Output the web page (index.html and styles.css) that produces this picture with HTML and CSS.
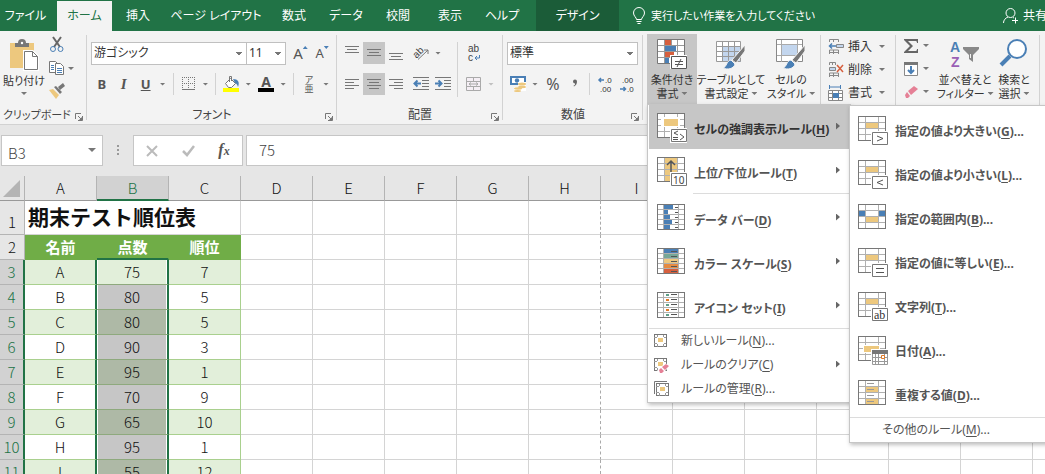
FILE: index.html
```html
<!DOCTYPE html>
<html lang="ja">

<head>
  <meta charset="UTF-8">
  <meta name="viewport" content="width=device-width, initial-scale=1.0">
  <title>期末テスト順位表</title>
  <link rel="stylesheet" href="styles.css">
</head>

<body>
  <!-- Shared icon parts -->
  <svg width="0" height="0" class="sprite" aria-hidden="true">
    <symbol id="grid" viewBox="0 0 30 30">
      <rect x=".5" y=".5" width="27" height="24" fill="#fff" />
      <path d="M7.5 1v23M20.5 1v23M1 6.5h26M1 12.5h26M1 18.5h26" stroke="#b0b0b0" fill="none" />
      <rect x=".5" y=".5" width="27" height="24" fill="none" stroke="#777" />
    </symbol>
    <symbol id="grid-hit" viewBox="0 0 30 30">
      <use href="#grid" width="30" height="30" />
      <path d="M8 7h12v5H8z" fill="#edc87e" />
    </symbol>
    <symbol id="badge" viewBox="0 0 30 30">
      <path d="M13 15h17v15H13z" fill="#fff" />
      <path d="M14.5 16.5h15v12h-15z" fill="#fff" stroke="#777" />
    </symbol>
    <symbol id="grid-rows" viewBox="0 0 30 30">
      <rect x=".5" y=".5" width="27" height="25" fill="#fff" />
      <path d="M6.5 1v24M21.5 1v24M1 5.5h26M1 10.5h26M1 15.5h26M1 20.5h26" stroke="#b0b0b0" fill="none" />
      <rect x=".5" y=".5" width="27" height="25" fill="none" stroke="#777" />
    </symbol>
    <symbol id="small-grid" viewBox="0 0 16 16">
      <rect x=".5" y="1.5" width="12" height="12" fill="#fff" stroke="#777" />
      <path d="M0 4.5h12M0 10.5h12M3.5 2v12M9.5 2v12" stroke="#999" />
      <path d="M3 4h7v7H3z" fill="#fff" />
      <path d="M4 5h5v4H4z" fill="#edc87e" />
    </symbol>
    <symbol id="launcher" viewBox="0 0 8 8">
      <path d="M.5 6V.5H6M3 3l3 3M7.5 3v4.5H3" stroke="#777" fill="none" />
      <path d="M7 4v3H4z" fill="#777" />
    </symbol>
  </svg>

  <div class="app">
    <header class="tabs">
      <nav class="tab-list">
        <a class="tab file" href="#">ファイル</a>
        <a class="tab active" href="#">ホーム</a>
        <a class="tab" href="#">挿入</a>
        <a class="tab wide" href="#">ページ レイアウト</a>
        <a class="tab" href="#">数式</a>
        <a class="tab" href="#">データ</a>
        <a class="tab" href="#">校閲</a>
        <a class="tab" href="#">表示</a>
        <a class="tab" href="#">ヘルプ</a>
        <a class="tab design" href="#">デザイン</a>
      </nav>
      <button class="tell-me">
        <svg width="12" height="18" viewBox="0 0 12 18" fill="none" stroke="#fff">
          <path d="M3.5 12.5c0-2-3-3.500-3-6.500a5.500 5.500 0 0 1 11 0c0 3-3 4.500-3 6.500zM3.500 14.500h5M4.500 16.500h3" />
        </svg>
        実行したい作業を入力してください
      </button>
      <button class="share">
        <svg width="16" height="16" viewBox="0 0 16 16" fill="none" stroke="#fff">
          <circle cx="7.5" cy="5" r="4.5" />
          <path d="M.5 15c0-3 2-5 4.500-6M10 9.500l1 .5M9 12.500h6M12.500 9.500v6" />
        </svg>
        共有
      </button>
    </header>

    <section class="ribbon">
      <!-- Clipboard -->
      <div class="group clipboard">
        <div class="group-body">
          <button class="big paste">
            <svg width="30" height="32" viewBox="0 0 30 32">
              <path d="M1 4h24v25H1z" fill="#edc87e" />
              <path d="M6 8V4h3a4 4 0 0 1 8 0h3v4z" fill="#777" />
              <circle cx="13" cy="4" r="1.2" fill="#fff" />
              <path d="M15.5 12.5h8l5 5v13h-13z" fill="#fff" stroke="#fff" stroke-width="3" />
              <path d="M15.5 12.5h8l5 5v13h-13zM23.5 12.5v5h5" fill="#fff" stroke="#777" />
            </svg>
            <span>貼り付け</span>
            <i class="caret"></i>
          </button>
          <div class="stack">
            <button class="tool" aria-label="切り取り">
              <svg width="16" height="16" viewBox="0 0 16 16" fill="none">
                <path d="M4 0l7 10M12 0L5 10" stroke="#666" stroke-width="2" />
                <circle cx="4" cy="12" r="2.5" stroke="#4a7fb5" />
                <circle cx="11.5" cy="12" r="2.5" stroke="#4a7fb5" />
              </svg>
            </button>
            <button class="tool" aria-label="コピー">
              <svg width="16" height="16" viewBox="0 0 16 16">
                <path d="M.5 1.5h6l2 2v9h-8z" fill="#fff" stroke="#777" />
                <path d="M2 5.5h3M2 7.5h3M2 9.5h3" stroke="#4a7fb5" />
                <path d="M6.5 3.5h5l3 3v8h-8z" fill="#fff" stroke="#777" />
                <path d="M8 8.5h5M8 10.5h5M8 12.5h5" stroke="#4a7fb5" />
              </svg>
            </button>
            <button class="tool" aria-label="書式のコピー">
              <svg width="16" height="16" viewBox="0 0 16 16">
                <path d="M0 7l4-1 6 6-3 4z" fill="#edc87e" />
                <path d="M5 4l2-1 6 6-2 2zM9 4l5-4 2 3-5 4z" fill="#777" />
              </svg>
            </button>
          </div>
          <i class="caret"></i>
        </div>
        <div class="group-label">クリップボード<svg class="launcher" width="8" height="8"><use href="#launcher" /></svg></div>
      </div>

      <!-- Font -->
      <div class="group font">
        <div class="group-body rows">
          <div class="row">
            <select class="box font-name" aria-label="フォント"><option>游ゴシック</option></select>
            <select class="box font-size" aria-label="フォント サイズ"><option>11</option></select>
            <button class="tool size-step" aria-label="拡大"><span class="up">A</span><i class="mark up-mark"></i></button>
            <button class="tool size-step" aria-label="縮小"><span class="down">A</span><i class="mark down-mark"></i></button>
          </div>
          <div class="row">
            <button class="tool letter"><b>B</b></button>
            <button class="tool letter"><em>I</em></button>
            <button class="tool letter"><u>U</u></button>
            <i class="caret slot"></i>
            <i class="bar"></i>
            <button class="tool" aria-label="罫線">
              <svg width="14" height="14" viewBox="0 0 14 14" stroke="#777">
                <path d="M0 .5h14M0 6.5h14M.5 0v13M6.5 0v13M12.5 0v13" stroke-dasharray="1 1" />
                <path d="M0 12.5h13" />
              </svg>
            </button>
            <i class="caret slot"></i>
            <i class="bar"></i>
            <button class="tool" aria-label="塗りつぶしの色">
              <svg width="16" height="16" viewBox="0 0 16 16">
                <path d="M2.5 7.5l5-5 5 5-4 4h-3z" fill="#fff" stroke="#777" />
                <path d="M6.5 6V.5h2V5" stroke="#777" fill="none" />
                <path d="M10 3c5 0 7 3 5 8-1-3-2-4-3-4z" fill="#4a7fb5" />
                <path d="M0 12h16v4H0z" fill="#ff0" />
              </svg>
            </button>
            <i class="caret slot"></i>
            <button class="tool font-color" aria-label="フォントの色"><b>A</b></button>
            <i class="caret slot"></i>
            <i class="bar"></i>
            <button class="tool ruby" aria-label="ふりがな"><span>ア</span><span>亜</span></button>
            <i class="caret slot"></i>
          </div>
        </div>
        <div class="group-label">フォント<svg class="launcher" width="8" height="8"><use href="#launcher" /></svg></div>
      </div>

      <!-- Alignment -->
      <div class="group align">
        <div class="group-body">
          <div class="rows">
            <div class="row">
              <button class="tool" aria-label="上揃え"><svg width="14" height="14" stroke="#777"><path d="M0 .5h14M2 3.5h10M0 6.5h14" /></svg></button>
              <button class="tool on" aria-label="上下中央揃え"><svg width="14" height="14" stroke="#777"><path d="M0 3.5h14M2 6.5h10M0 9.5h14" /></svg></button>
              <button class="tool" aria-label="下揃え"><svg width="14" height="14" stroke="#777"><path d="M0 7.5h14M2 10.5h10M0 13.5h14" /></svg></button>
              <button class="tool gap" aria-label="方向">
                <svg width="17" height="16" viewBox="0 0 17 16">
                  <text x="0" y="11" transform="rotate(-45 5 8)" class="icon-ab">ab</text>
                  <path d="M5 14.5L15 5M11 5h4v4" stroke="#777" fill="none" />
                </svg>
              </button>
              <i class="caret slot"></i>
            </div>
            <div class="row">
              <button class="tool" aria-label="左揃え"><svg width="14" height="14" stroke="#777"><path d="M0 2.5h14M0 5.5h9M0 8.5h14M0 11.5h9" /></svg></button>
              <button class="tool on" aria-label="中央揃え"><svg width="14" height="14" stroke="#777"><path d="M0 2.5h14M2 5.5h10M0 8.5h14M2 11.5h10" /></svg></button>
              <button class="tool" aria-label="右揃え"><svg width="14" height="14" stroke="#777"><path d="M0 2.5h14M5 5.5h9M0 8.5h14M5 11.5h9" /></svg></button>
              <button class="tool gap" aria-label="インデントを減らす">
                <svg width="16" height="14" fill="none"><path d="M0 .5h16M9 3.5h7M9 6.5h7M9 9.5h7M0 12.5h16" stroke="#777" /><path d="M8 6.5H2M4.5 3.5l-3 3 3 3" stroke="#4a7fb5" stroke-width="2" /></svg>
              </button>
              <button class="tool" aria-label="インデントを増やす">
                <svg width="16" height="14" fill="none"><path d="M0 .5h16M9 3.5h7M9 6.5h7M9 9.5h7M0 12.5h16" stroke="#777" /><path d="M0 6.5h6M3.5 3.5l3 3-3 3" stroke="#4a7fb5" stroke-width="2" /></svg>
              </button>
            </div>
          </div>
          <i class="bar tall"></i>
          <div class="rows">
            <div class="row">
              <button class="tool" aria-label="折り返して全体を表示する">
                <svg width="14" height="18" viewBox="0 0 14 18">
                  <text x="1" y="8" class="icon-ab">ab</text>
                  <text x="1" y="17" class="icon-ab">c</text>
                  <path d="M12.5 11v3H8M10 12l-2 2 2 2" stroke="#4a7fb5" fill="none" />
                </svg>
              </button>
            </div>
            <div class="row">
              <button class="tool" aria-label="セルを結合して中央揃え">
                <svg width="16" height="16" viewBox="0 0 16 16" fill="#f5eff5" stroke="#aaa">
                  <path d="M.5 1.5h14v13H.5zM.5 5.5h14M.5 10.5h14M7.5 1.5v4M7.5 10.5v4M3 8h9M5 6.500L3 8l2 1.500M10 6.500L12 8l-2 1.500" />
                </svg>
              </button>
              <i class="caret slot off"></i>
            </div>
          </div>
        </div>
        <div class="group-label">配置<svg class="launcher" width="8" height="8"><use href="#launcher" /></svg></div>
      </div>

      <!-- Number -->
      <div class="group number">
        <div class="group-body rows">
          <div class="row">
            <select class="box format" aria-label="表示形式"><option>標準</option></select>
          </div>
          <div class="row">
            <button class="tool" aria-label="通貨表示形式">
              <svg width="16" height="16" viewBox="0 0 16 16">
                <path d="M0 0h16v9H0z" fill="#4a7fb5" />
                <path d="M2 2h12v5H2z" fill="#fff" />
                <circle cx="7" cy="4.5" r="2.2" fill="#4a7fb5" />
                <path d="M8 6h8v9H4v-4h4z" fill="#fff" />
                <g fill="#edc87e"><ellipse cx="12" cy="8" rx="4" ry="1.5" /><ellipse cx="12" cy="11" rx="4" ry="1.2" /><ellipse cx="8" cy="12.5" rx="4" ry="1.2" /><ellipse cx="7.5" cy="15" rx="3.5" ry="1" /></g>
              </svg>
            </button>
            <i class="caret slot"></i>
            <button class="tool percent">%</button>
            <button class="tool" aria-label="桁区切りスタイル">
              <svg width="6" height="10"><path d="M1 2.500a2 2 0 1 1 4 0c0 2-1 4-3 5l-.5-.8C3 6 3.300 5.500 3 4.500 2 4.500 1 3.500 1 2.500z" fill="#666" /></svg>
            </button>
            <i class="bar"></i>
            <button class="tool" aria-label="小数点以下の表示桁数を増やす">
              <svg width="16" height="18" viewBox="0 0 16 18"><text x="8" y="8" class="icon-num">.0</text><text x="3" y="17" class="icon-num">.00</text><path d="M7 5H2M4 3L2 5l2 2" stroke="#4a7fb5" stroke-width="1.5" fill="none" /></svg>
            </button>
            <button class="tool" aria-label="小数点以下の表示桁数を減らす">
              <svg width="16" height="18" viewBox="0 0 16 18"><text x="3" y="8" class="icon-num">.00</text><text x="8" y="17" class="icon-num">.0</text><path d="M1 14h5M4.500 12l2 2-2 2" stroke="#4a7fb5" stroke-width="1.5" fill="none" /></svg>
            </button>
          </div>
        </div>
        <div class="group-label">数値<svg class="launcher" width="8" height="8"><use href="#launcher" /></svg></div>
      </div>

      <!-- Styles -->
      <div class="group styles">
        <div class="dropdown">
          <button class="big open">
            <svg width="30" height="31" viewBox="0 0 30 31">
              <path d="M.5.5h27v24H.5z" fill="#fff" />
              <path d="M8 1h6v5H8zM8 13h9v5H8z" fill="#d65f3e" />
              <path d="M8 7h11v5H8zM8 19h4v5H8z" fill="#4a7fb5" />
              <path d="M7.5 1v23M14.5 1v5M20.5 1v23M1 6.5h26M1 12.5h26M1 18.5h26" stroke="#999" fill="none" />
              <path d="M.5.5h27v24H.5z" fill="none" stroke="#777" />
              <path d="M13 16h17v14H13z" fill="#fff" />
              <path d="M14.5 17.5h15v12h-15zM18 22.5h8M18 25.5h8M24 20l-4 8" fill="none" stroke="#555" />
            </svg>
            <span>条件付き</span>
            <span>書式 <i class="caret"></i></span>
          </button>

          <div class="menu main-menu" role="menu">
            <button class="item hot">
              <svg width="30" height="30"><use href="#grid" width="30" height="30" /><path d="M4 4h19v10H4z" fill="#fff" /><path d="M7 6h14v7H7z" fill="#edc87e" /><use href="#badge" width="30" height="30" /><path d="M21 18l-4 2 4 2M16 24.5h5M16 26.5h5M23 21l4 3-4 3" fill="none" stroke="#555" /></svg>
              <span>セルの強調表示ルール(<u>H</u>)</span><i class="arrow"></i>
            </button>
            <button class="item">
              <svg width="30" height="30"><use href="#grid" width="30" height="30" /><path d="M8 1h12v5H8zM8 7h12v5H8zM8 13h12v5H8zM8 19h12v5H8z" fill="#edc87e" /><path d="M14 15V4M10 8l4-4 4 4" fill="none" stroke="#555" stroke-width="1.5" /><use href="#badge" width="30" height="30" /><text x="16" y="27" class="icon-badge">10</text></svg>
              <span>上位/下位ルール(<u>T</u>)</span><i class="arrow"></i>
            </button>
            <hr class="inset">
            <button class="item">
              <svg width="30" height="30"><use href="#grid-rows" width="30" height="30" /><path d="M7 1h9v4H7zM7 6h4v4H7zM7 11h6v4H7zM7 16h8v4H7zM7 21h6v4H7z" fill="#4a7fb5" /><path d="M18 3.5h3M18 8.5h3M18 13.5h3M18 18.5h3M18 23.5h3" stroke="#555" /></svg>
              <span>データ バー(<u>D</u>)</span><i class="arrow"></i>
            </button>
            <button class="item">
              <svg width="30" height="30"><use href="#grid-rows" width="30" height="30" /><path d="M7 1h14v4H7z" fill="#4a7fb5" /><path d="M7 6h14v4H7z" fill="#76a797" /><path d="M7 11h14v4H7z" fill="#edc87e" /><path d="M7 16h14v4H7z" fill="#e58b42" /><path d="M7 21h14v4H7z" fill="#d65f3e" /><path d="M14 3.5h6M14 8.5h6M14 13.5h6M14 18.5h6M14 23.5h6" stroke="#555" /></svg>
              <span>カラー スケール(<u>S</u>)</span><i class="arrow"></i>
            </button>
            <button class="item">
              <svg width="30" height="30"><use href="#grid-rows" width="30" height="30" /><path d="M9 2h3v2H9zM9 12h3v2H9zM9 22h3v2H9z" fill="#5fa08a" /><path d="M9 7h3v2H9zM9 17h3v2H9z" fill="#e07b28" /><path d="M14 2.5h6M14 7.5h6M14 12.5h6M14 17.5h6M14 22.5h6" stroke="#555" /></svg>
              <span>アイコン セット(<u>I</u>)</span><i class="arrow"></i>
            </button>
            <hr>
            <button class="item small">
              <svg width="16" height="16"><use href="#small-grid" width="16" height="16" /></svg>
              <span>新しいルール(<u>N</u>)...</span>
            </button>
            <button class="item small">
              <svg width="16" height="16"><use href="#small-grid" width="16" height="16" /><path d="M3 14l8-8 5 3-7 7H5z" fill="#fff" /><path d="M5 13l2-2 3 3-2 2H6zM8 10l4-3 3 2-4 4z" fill="#e58096" /></svg>
              <span>ルールのクリア(<u>C</u>)</span><i class="arrow"></i>
            </button>
            <button class="item small">
              <svg width="16" height="16"><use href="#small-grid" x="2" y="1" width="16" height="16" /><path d="M.5 13V.5H13" stroke="#777" fill="none" /></svg>
              <span>ルールの管理(<u>R</u>)...</span>
            </button>
          </div>

          <div class="menu submenu" role="menu">
            <button class="item">
              <svg width="30" height="30"><use href="#grid-hit" width="30" height="30" /><use href="#badge" width="30" height="30" /><path d="M19 20l6 2.500-6 2.500" fill="none" stroke="#555" /></svg>
              <span>指定の値より大きい(<u>G</u>)...</span>
            </button>
            <button class="item">
              <svg width="30" height="30"><use href="#grid-hit" width="30" height="30" /><use href="#badge" width="30" height="30" /><path d="M25 20l-6 2.500 6 2.500" fill="none" stroke="#555" /></svg>
              <span>指定の値より小さい(<u>L</u>)...</span>
            </button>
            <button class="item">
              <svg width="30" height="30"><use href="#grid" width="30" height="30" /><path d="M1 7h6v5H1zM21 7h6v5h-6z" fill="#4a7fb5" /><path d="M8 13h12v5H8z" fill="#edc87e" /></svg>
              <span>指定の範囲内(<u>B</u>)...</span>
            </button>
            <button class="item">
              <svg width="30" height="30"><use href="#grid-hit" width="30" height="30" /><use href="#badge" width="30" height="30" /><path d="M18 20.5h8M18 24.5h8" stroke="#555" /></svg>
              <span>指定の値に等しい(<u>E</u>)...</span>
            </button>
            <button class="item">
              <svg width="30" height="30"><use href="#grid-hit" width="30" height="30" /><use href="#badge" width="30" height="30" /><text x="16" y="27" class="icon-serif">ab</text></svg>
              <span>文字列(<u>T</u>)...</span>
            </button>
            <button class="item">
              <svg width="30" height="30"><use href="#grid" width="30" height="30" /><path d="M5 9h17v8H5z" fill="#fff" /><path d="M6 10h15v6H6z" fill="#edc87e" /><path d="M13 13h17v17H13z" fill="#fff" /><path d="M14.5 14.5h15v14h-15zM17.5 18v10M20.5 18v10M26.5 18v10M15 21.5h14M15 25.5h14" fill="none" stroke="#999" /><path d="M14 14h16v4H14z" fill="#777" /><path d="M23.5 19.5h3v3h-3z" fill="#fff" stroke="#e07b28" /></svg>
              <span>日付(<u>A</u>)...</span>
            </button>
            <button class="item">
              <svg width="30" height="30"><use href="#grid" width="30" height="30" /><path d="M8 7h12v5H8zM8 19h12v5H8z" fill="#edc87e" /><path d="M9 3.5h7M9 9.5h7M9 15.5h7M9 21.5h7" stroke="#999" /></svg>
              <span>重複する値(<u>D</u>)...</span>
            </button>
            <hr>
            <button class="item small"><span>その他のルール(<u>M</u>)...</span></button>
          </div>
        </div>

        <button class="big table-style">
          <svg width="30" height="31" viewBox="0 0 30 31">
            <path d="M.5 2.5h24v20H.5z" fill="#fff" />
            <path d="M7 8h18v15H7z" fill="#c3d6ee" />
            <path d="M.5 2.5h24v20H.5zM6.5 2v20M12.5 2v20M18.5 2v20M0 7.5h24M0 12.5h24M0 17.5h24" fill="none" stroke="#999" />
            <path d="M29 6v6L20 24l-4-3z" fill="#777" stroke="#f3f3f3" />
            <path d="M7 29c4-1 3-7 8-8l4 4c-1 5-8 6-12 4z" fill="#4a7fb5" stroke="#f3f3f3" />
          </svg>
          <span>テーブルとして</span>
          <span>書式設定 <i class="caret"></i></span>
        </button>
        <button class="big cell-style">
          <svg width="30" height="31" viewBox="0 0 30 31">
            <path d="M.5.5h26v22H.5z" fill="#fff" stroke="#888" />
            <path d="M6 6h15v10H6z" fill="#c3d6ee" />
            <path d="M5.5 1v22M21.5 1v22M1 5.5h25M1 16.5h25" fill="none" stroke="#aaa" />
            <path d="M29 6v6L20 24l-4-3z" fill="#777" stroke="#f3f3f3" />
            <path d="M7 29c4-1 3-7 8-8l4 4c-1 5-8 6-12 4z" fill="#4a7fb5" stroke="#f3f3f3" />
          </svg>
          <span>セルの</span>
          <span>スタイル <i class="caret"></i></span>
        </button>
      </div>

      <!-- Cells -->
      <div class="group cells">
        <button class="line">
          <svg width="16" height="16" viewBox="0 0 16 16" fill="none"><path d="M1.5 3V.5h9V3M5.5 0v3M1.5 15v-4h9v4M5.5 11v4M1 13.5h9" stroke="#888" /><path d="M8.5 5.5h7v3h-7z" fill="#c3d6ee" stroke="#888" /><path d="M8 7H2M4 4.500L1.500 7 4 9.500" stroke="#4a7fb5" stroke-width="1.5" /></svg>
          <span>挿入</span><i class="caret"></i>
        </button>
        <button class="line">
          <svg width="16" height="16" viewBox="0 0 16 16" fill="none"><path d="M1.5 3V.5h6V3M4.5 0v3M1.5 15v-4h9v4M5.5 11v4M1 13.5h9" stroke="#888" /><path d="M1.5 5.5h6v3h-6z" fill="#c3d6ee" stroke="#888" /><path d="M9 3l6 7M15 3l-6 7" stroke="#d65f3e" stroke-width="1.5" /></svg>
          <span>削除</span><i class="caret"></i>
        </button>
        <button class="line">
          <svg width="16" height="16" viewBox="0 0 16 16" fill="none"><path d="M1.5 0v4M12.5 0v4M2 2h10" stroke="#4a7fb5" /><path d="M.5 5.5h14v10H.5zM4.5 5v10M10.5 5v10M0 8.5h14M0 12.5h14" fill="#fff" stroke="#888" /><path d="M5 8h6v5H5z" fill="#4a7fb5" /></svg>
          <span>書式</span><i class="caret"></i>
        </button>
      </div>

      <!-- Editing -->
      <div class="group editing">
        <div class="stack">
          <button class="line" aria-label="合計"><svg width="16" height="16" viewBox="0 0 16 16"><path d="M1 1h14v4h-1c0-2-1-2-2-2H5l5 5-5 5h7c1 0 2 0 2-2h1v4H1v-1l6-6-6-6z" fill="#666" /></svg><i class="caret"></i></button>
          <button class="line" aria-label="フィル"><svg width="16" height="16" viewBox="0 0 16 16"><path d="M1.5 1.5h13v13h-13z" fill="#fff" stroke="#888" /><path d="M1 1h14v3H1z" fill="#777" /><path d="M8 5v7M5 9l3 3 3-3" fill="none" stroke="#4a7fb5" stroke-width="2" /></svg><i class="caret"></i></button>
          <button class="line" aria-label="クリア"><svg width="16" height="16" viewBox="0 0 16 16"><path d="M5 7l6-5 4 3-7 6z" fill="#e58096" /><path d="M4 8l3 4-2 2H3l-1-3z" fill="#e58096" /></svg><i class="caret"></i></button>
        </div>
        <button class="big sort">
          <svg width="30" height="31" viewBox="0 0 30 31">
            <text x="0" y="13" class="icon-az" fill="#4a7fb5">A</text>
            <text x="1" y="28" class="icon-az" fill="#9a5fb5">Z</text>
            <path d="M13 8h16v2l-6 6v7l-4-3v-4l-6-6z" fill="#888" />
            <path d="M20.500 15v4" stroke="#f3f3f3" />
          </svg>
          <span>並べ替えと</span>
          <span>フィルター <i class="caret"></i></span>
        </button>
        <button class="big find">
          <svg width="30" height="31" viewBox="0 0 30 31">
            <path d="M2 26l9-9" stroke="#4a7fb5" stroke-width="4" />
            <circle cx="18" cy="10" r="9" fill="#fff" stroke="#4a7fb5" stroke-width="2" />
          </svg>
          <span>検索と</span>
          <span>選択 <i class="caret"></i></span>
        </button>
      </div>
    </section>

    <section class="formula-bar">
      <div class="name-box">
        <input type="text" value="B3" aria-label="名前ボックス">
        <i class="caret large"></i>
      </div>
      <i class="dots"></i>
      <div class="fx-box">
        <button aria-label="キャンセル"><svg width="12" height="12"><path d="M1 1l10 10M11 1L1 11" stroke="#bbb" stroke-width="2" /></svg></button>
        <button aria-label="入力"><svg width="13" height="12"><path d="M1 6l4 4 7-9" fill="none" stroke="#bbb" stroke-width="2.5" /></svg></button>
        <button class="fx">f<small>x</small></button>
      </div>
      <input class="formula" type="text" value="75" aria-label="数式バー">
    </section>

    <table class="sheet">
      <thead>
        <tr id="columns">
          <th class="corner"><svg width="18" height="18"><path d="M17 1v17H0z" fill="#b4b4b4" /></svg></th>
        </tr>
      </thead>
      <tbody id="cells">
      </tbody>
    </table>
  </div>

  <script>
    const columns = "ABCDEFGHIJKLMNO".split("");
    const scores = [
      ["A", 75, 7],
      ["B", 80, 5],
      ["C", 80, 5],
      ["D", 90, 3],
      ["E", 95, 1],
      ["F", 70, 9],
      ["G", 65, 10],
      ["H", 95, 1],
      ["I", 55, 12]
    ];

    // Empty cells to the right of the list; a page break follows column H
    function emptyCells() {
      return columns.slice(3).map(c => `<td${c === "H" ? ' class="break"' : ""}></td>`).join("");
    }

    document.getElementById("columns").innerHTML += columns
      .map(c => `<th${c === "B" ? ' class="selected"' : ""}>${c}</th>`).join("");

    let rows = `<tr class="title"><th>1</th><td colspan="3">期末テスト順位表</td>${emptyCells()}</tr>`;
    rows += `<tr class="heading"><th>2</th><td>名前</td><td>点数</td><td>順位</td>${emptyCells()}</tr>`;
    scores.forEach((row, i) => {
      rows += `<tr class="data"><th>${i + 3}</th>${row.map(v => `<td>${v}</td>`).join("")}${emptyCells()}</tr>`;
    });
    document.getElementById("cells").innerHTML = rows;
  </script>
</body>

</html>
```
FILE: styles.css
```css
* {
  box-sizing: border-box;
}

body {
  margin: 0;
  font-family: "Noto Sans", "Noto Sans CJK JP", sans-serif;
  font-size: 12px;
  line-height: 14px;
  font-feature-settings: "palt";
  color: #333;
}

button,
input,
select {
  font: inherit;
  font-feature-settings: inherit;
  color: inherit;
}

button {
  padding: 0;
  border: none;
  background: none;
  white-space: nowrap;
}

svg {
  flex: none;
  overflow: visible;
}

.sprite {
  position: absolute;
}

.app {
  height: 100vh;
  overflow: hidden;
  background-color: #fff;
}

/* Tabs */
.tabs {
  display: flex;
  height: 31px;
  background-color: #217346;
  color: #fff;
}

.tab-list {
  display: flex;
  padding-top: 1px;
}

.tab {
  display: flex;
  align-items: center;
  justify-content: center;
  width: 52px;
  color: #fff;
  text-decoration: none;
  white-space: nowrap;
}

.tab.file {
  width: 57px;
  padding-right: 6px;
}

.tab.active {
  width: 55px;
  background-color: #f3f3f3;
  color: #217346;
}

.tab.wide {
  width: 104px;
}

.tab.design {
  width: 83px;
  margin: -1px 0 0 8px;
  background-color: #1b5c38;
}

.tell-me,
.share {
  display: flex;
  align-items: center;
  gap: 6px;
}

.tell-me {
  margin-left: 14px;
  font-size: 11px;
  color: #fff;
}

.share {
  width: 42px;
  gap: 4px;
  margin-left: auto;
  color: #fff;
}

/* Ribbon */
.ribbon {
  display: flex;
  height: 94px;
  background-color: #f3f3f3;
  border-bottom: 1px solid #d2d2d2;
}

.group {
  position: relative;
  flex: none;
  display: flex;
  flex-direction: column;
  justify-content: space-between;
}

.group::after {
  content: "";
  position: absolute;
  top: 4px;
  bottom: 4px;
  right: 0;
  width: 1px;
  background-color: #d2d2d2;
}

.group-body {
  display: flex;
  padding: 11px 4px 0;
}

.group-label {
  display: flex;
  align-items: center;
  justify-content: center;
  height: 14px;
  margin-bottom: 2px;
  padding-left: 3px;
  white-space: nowrap;
  color: #444;
}

.font .group-label,
.align .group-label,
.number .group-label {
  padding-left: 12px;
}

.launcher {
  margin: 3px 4px 0 auto;
}

.font .group-label::before,
.align .group-label::before,
.number .group-label::before {
  content: "";
  margin-right: auto;
}

.rows {
  display: flex;
  flex-direction: column;
  gap: 9px;
}

.row {
  display: flex;
  align-items: center;
  height: 22px;
}

.tool {
  position: relative;
  display: flex;
  align-items: center;
  justify-content: center;
  width: 22px;
  height: 22px;
  color: #555;
}

.tool.on {
  background-color: #c6c6c6;
}

.tool.gap {
  margin-left: 3px;
}

.caret {
  display: inline-block;
  flex: none;
  width: 6px;
  height: 3px;
  background-color: #777;
  clip-path: polygon(0 0, 100% 0, 50% 100%);
  vertical-align: 3px;
}

.caret.slot {
  width: 13px;
  clip-path: polygon(3px 0, 9px 0, 6px 100%);
}

.caret.off {
  background-color: #c0c0c0;
}

.caret.large {
  width: 8px;
  height: 4px;
}

.bar {
  flex: none;
  width: 1px;
  height: 22px;
  margin: 0 4px 0 3px;
  background-color: #d2d2d2;
}

.bar.tall {
  height: 55px;
  margin-right: 5px;
}

.box {
  appearance: none;
  height: 23px;
  padding: 0 6px 0 2px;
  border: 1px solid #c0c0c0;
  border-radius: 0;
  background: linear-gradient(#777, #777) right 4px top 9px / 6px 1px no-repeat,
    linear-gradient(#777, #777) right 5px top 10px / 4px 1px no-repeat,
    linear-gradient(#777, #777) right 6px top 11px / 2px 1px no-repeat, #fff;
}

.font-name {
  width: 158px;
}

.font-size {
  width: 40px;
  margin: 0 4px 0 -1px;
}

.format {
  width: 131px;
}

.size-step .up {
  font-size: 15px;
}

.size-step .down {
  font-size: 13px;
}

.mark {
  width: 5px;
  height: 3px;
  align-self: flex-start;
  margin-top: 4px;
  background-color: #4a7fb5;
}

.up-mark {
  clip-path: polygon(50% 0, 100% 100%, 0 100%);
}

.down-mark {
  clip-path: polygon(0 0, 100% 0, 50% 100%);
}

.letter {
  font-size: 13px;
}

.letter em {
  font-family: "Liberation Serif", serif;
  font-size: 15px;
  font-weight: bold;
}

.letter u {
  font-weight: bold;
}

.font-color {
  font-size: 14px;
}

.font-color b {
  width: 16px;
  height: 16px;
  line-height: 12px;
  border-bottom: 4px solid #000;
}

.ruby {
  flex-direction: column;
  font-size: 9px;
  line-height: 9px;
}

.percent {
  font-size: 16px;
}

.icon-ab {
  font: 10px "Liberation Sans", sans-serif;
  fill: #444;
}

.icon-num {
  font: 8px "Liberation Sans", sans-serif;
  fill: #333;
}

.icon-badge {
  font: 10px "Noto Sans", sans-serif;
  fill: #444;
}

.icon-serif {
  font: 12px "Liberation Serif", serif;
  fill: #333;
}

.icon-az {
  font: bold 14px "Liberation Sans", sans-serif;
}

.stack {
  display: flex;
  flex-direction: column;
}

.big {
  display: flex;
  flex-direction: column;
  align-items: center;
  height: 70px;
  padding-top: 5px;
  font-size: 11px;
}

.big svg {
  margin-bottom: 3px;
}

.clipboard {
  width: 87px;
}

.clipboard .group-body {
  padding: 3px 0 0 2px;
}

.clipboard .group-label {
  font-size: 11px;
}

.clipboard .stack {
  gap: 1px;
}

.clipboard .group-body > .caret {
  margin-top: 33px;
}

.paste {
  width: 44px;
}

.paste .caret {
  margin-top: 4px;
}

.font {
  width: 250px;
}

.font .rows {
  padding-left: 4px;
}

.align {
  width: 166px;
}

.number {
  width: 140px;
}

/* Styles, cells and editing groups */
.styles,
.editing {
  flex-direction: row;
  justify-content: flex-start;
  padding-top: 3px;
}

.styles {
  width: 178px;
  padding-left: 4px;
}

.dropdown {
  position: relative;
}

.big.open {
  width: 50px;
  background-color: #c6c6c6;
}

.table-style {
  width: 68px;
}

.cell-style {
  width: 52px;
}

.cells {
  width: 75px;
  padding: 4px 0 0 7px;
  justify-content: flex-start;
}

.line {
  display: flex;
  align-items: center;
  gap: 4px;
  height: 23px;
}

.line span {
  width: 27px;
  text-align: left;
}

.editing {
  width: 144px;
  padding-left: 7px;
}

.editing .stack {
  width: 34px;
}

.sort {
  width: 56px;
}

.find {
  width: 42px;
}

/* Menus */
.menu {
  position: absolute;
  z-index: 10;
  background-color: #fff;
  border: 1px solid #c6c6c6;
  box-shadow: 1px 2px 4px rgba(0, 0, 0, 0.25);
}

.main-menu {
  top: 70px;
  left: 0;
  width: 204px;
  padding: 0 1px 1px;
}

.submenu {
  top: 71px;
  left: 202px;
  z-index: 11;
  width: 220px;
  padding: 3px 1px 0 0;
}

.item {
  display: flex;
  align-items: center;
  width: 100%;
  height: 44px;
  padding: 0 8px;
  font-weight: bold;
  color: #555;
}

.item svg {
  margin-right: 7px;
}

.main-menu .item svg {
  margin-top: 2px;
}

.main-menu .item span {
  padding-top: 6px;
}

.submenu .item span {
  padding-top: 2px;
}

.item.hot {
  background-color: #c6c6c6;
  color: #333;
}

.main-menu .item.small,
.submenu .item.small {
  height: 24px;
  padding: 0 8px 0 5px;
  font-weight: normal;
}

.main-menu .item.small svg {
  margin: 0 11px 0 0;
}

.menu .item.small span {
  padding-top: 0;
}

.submenu .item.small {
  padding-left: 32px;
}

.item u {
  text-underline-offset: 2px;
}

.arrow {
  width: 4px;
  height: 7px;
  margin: -2px 1px 0 auto;
  background-color: #666;
  clip-path: polygon(0 0, 100% 50%, 0 100%);
}

.menu hr {
  height: 1px;
  margin: 0;
  border: none;
  background-color: #dcdcdc;
}

.menu hr.inset {
  margin: 0 0 2px 44px;
}

/* Formula bar */
.formula-bar {
  display: flex;
  height: 51px;
  padding: 10px 0 10px 1px;
  background-color: #e6e6e6;
  font-family: "Noto Sans CJK JP", sans-serif;
  font-size: 15px;
  font-weight: 300;
}

.formula-bar input {
  min-width: 0;
  color: #444;
}

.name-box,
.fx-box,
.formula {
  border: 1px solid #c6c6c6;
  background-color: #fff;
}

.name-box {
  display: flex;
  align-items: center;
  width: 102px;
  padding: 3px 6px 0 6px;
}

.name-box input {
  flex: 1;
  padding: 0;
  border: none;
}

.name-box .caret {
  margin-top: -4px;
}

.dots {
  width: 2px;
  height: 10px;
  margin: 10px 14px 0;
  background: repeating-linear-gradient(#999 0 2px, transparent 2px 4px);
}

.fx-box {
  display: flex;
  width: 110px;
  margin-right: 3px;
}

.fx-box button {
  flex: 1;
}

.fx {
  font-family: "Liberation Serif", serif;
  font-size: 16px;
  font-style: italic;
  font-weight: bold;
  color: #555;
}

.fx small {
  font-size: 12px;
}

.formula {
  flex: 1;
  padding: 0 12px 3px;
}

/* Sheet */
.sheet {
  width: 1105px;
  table-layout: fixed;
  border-spacing: 0;
  font-family: "Noto Sans CJK JP", sans-serif;
  font-size: 15px;
  font-weight: 300;
  font-feature-settings: normal;
  line-height: 20px;
  color: #111;
}

.sheet th,
.sheet td {
  height: 25px;
  padding: 0;
  border-right: 1px solid #d4d4d4;
  border-bottom: 1px solid #d4d4d4;
  text-align: center;
}

.sheet th {
  background-color: #e6e6e6;
  border-color: #b4b4b4;
  font-weight: 300;
}

.sheet thead th {
  border-bottom-color: #999;
}

.sheet .corner {
  width: 25px;
  line-height: 0;
}

.sheet th.selected,
.sheet .data th {
  background-color: #d2d2d2;
  color: #217346;
}

.sheet th.selected {
  border-bottom: 2px solid #217346;
}

.sheet .data th {
  border-right: 2px solid #217346;
}

.sheet .break {
  border-right: 1px dashed #aaa;
}

.sheet .title th,
.sheet .title td {
  height: 34px;
}

.sheet .title th {
  padding-top: 8px;
}

.sheet .title td[colspan] {
  padding: 0 0 3px 3px;
  font-size: 21px;
  font-weight: bold;
  text-align: left;
}

.heading td:nth-child(-n+4) {
  background-color: #70ad47;
  border-color: #70ad47;
  color: #fff;
  font-weight: bold;
}

.sheet .heading td:nth-child(3) {
  border-bottom: 2px solid #217346;
}

.sheet .data td:nth-child(-n+4) {
  border-bottom-color: #a9d08e;
}

.sheet .data:nth-child(odd) td:nth-child(-n+4) {
  background-color: #e2efda;
}

.sheet .data td:nth-child(2),
.sheet .data td:nth-child(3) {
  border-right: 2px solid #217346;
}

.sheet .data td:nth-child(4) {
  border-right-color: #a9d08e;
}

.sheet .data td:nth-child(3) {
  background-color: #c6c6c6;
  border-bottom-color: #8ea97d;
  box-shadow: inset 1px 0 #fff, inset -1px 0 #fff;
}

.sheet .data:nth-child(odd) td:nth-child(3) {
  background-color: #aeb9a6;
}

.sheet .data:nth-child(3) td:nth-child(3) {
  background-color: #e2efda;
}
```
